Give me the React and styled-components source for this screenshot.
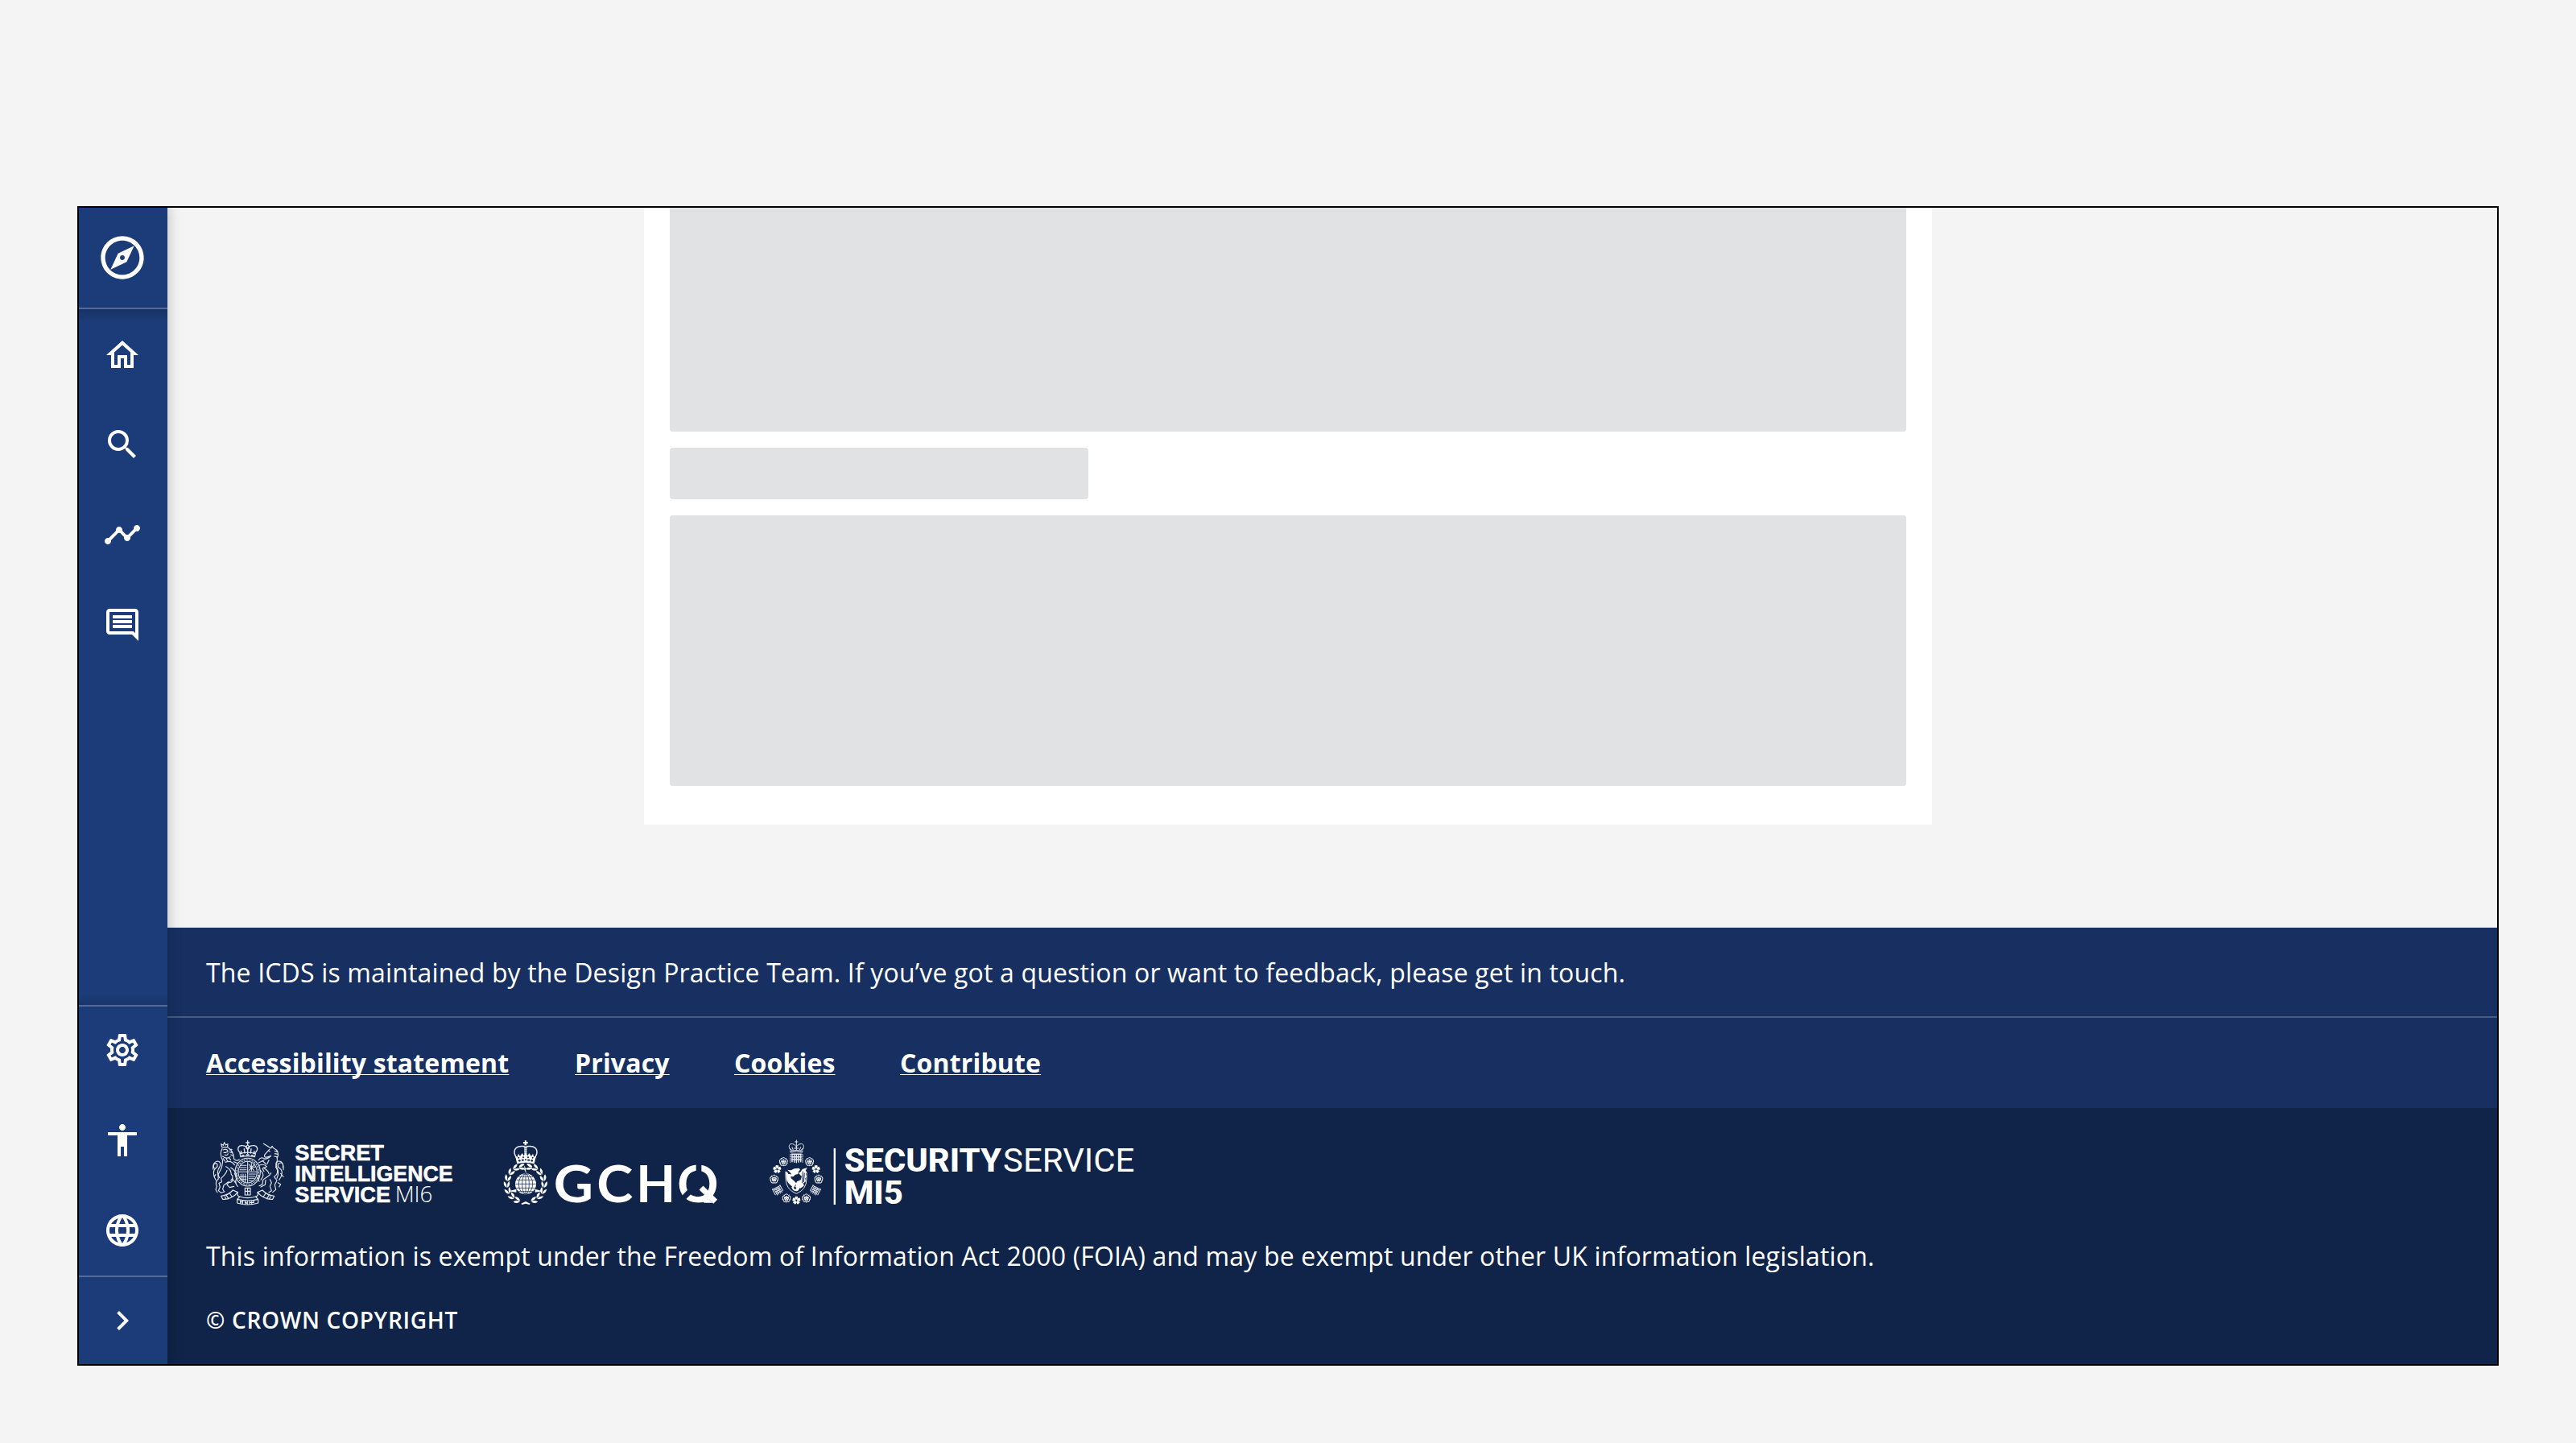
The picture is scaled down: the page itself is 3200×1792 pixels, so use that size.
import React from 'react';
import styled, { createGlobalStyle, css } from 'styled-components';

const GlobalStyle = createGlobalStyle`
  *, *::before, *::after { box-sizing: border-box; }
  body {
    margin: 0;
    background: #f4f4f4;
    font-family: "Open Sans", "Noto Sans", sans-serif;
    color: #fff;
  }
`;

const Page = styled.div`
  width: 3200px;
  height: 1792px;
  padding: 256px 96px 96px;
  overflow: hidden;
`;

const Frame = styled.div`
  position: relative;
  display: flex;
  height: 1440px;
  overflow: hidden;
  &::after {
    content: "";
    position: absolute;
    inset: 0;
    z-index: 2;
    border: 2px solid #000;
    pointer-events: none;
  }
`;

const SideBar = styled.nav`
  position: relative;
  z-index: 1;
  display: flex;
  flex-direction: column;
  width: 112px;
  background: #1c3c79;
  box-shadow: 0 0 16px rgba(0, 0, 0, 0.25);
`;

const Brand = styled.a`
  display: flex;
  align-items: center;
  justify-content: center;
  height: 128px;
  border-bottom: 2px solid #52699a;
  padding-top: 2px;
`;

const NavGroup = styled.div`
  display: flex;
  flex-direction: column;
  ${(p) =>
    p.$grow &&
    css`
      flex: 1;
      background:
        linear-gradient(to bottom, rgba(18, 36, 72, 0.4), rgba(18, 36, 72, 0) 16px),
        linear-gradient(to top, rgba(18, 36, 72, 0.3), rgba(18, 36, 72, 0) 14px);
    `}
  ${(p) => p.$ruled && css`box-shadow: inset 0 2px 0 #52699a;`}
`;

const NavItem = styled.button`
  display: flex;
  align-items: center;
  justify-content: center;
  height: 112px;
  padding: 0;
  border: 0;
  background: none;
  color: #fff;
`;

const Glyph = styled.svg`
  display: block;
  width: ${(p) => p.$size || 48}px;
  height: ${(p) => p.$size || 48}px;
  fill: #fff;
`;

const Main = styled.div`
  flex: 1;
  display: flex;
  flex-direction: column;
`;

const Content = styled.main`
  height: 896px;
  padding-left: 592px;
`;

const Sheet = styled.section`
  display: flex;
  flex-direction: column;
  gap: 20px;
  width: 1600px;
  height: 768px;
  padding: 0 32px;
  background: #fff;
`;

const Placeholder = styled.div`
  width: ${(p) => p.$width || '100%'};
  height: ${(p) => p.$height}px;
  border-radius: ${(p) => (p.$cut ? '0 0 4px 4px' : '4px')};
  background: #e1e2e4;
`;

const FooterBand = styled.div`
  display: flex;
  align-items: center;
  height: 112px;
  padding: 0 48px;
  background: #173061;
  ${(p) => p.$ruled && css`box-shadow: inset 0 -2px 0 #475a82;`}
`;

const Text = styled.p`
  margin: 0;
  font-size: 32px;
  line-height: 48px;
  letter-spacing: 0.005em;
  white-space: nowrap;
`;

const Links = styled.ul`
  display: flex;
  gap: 80px;
  margin: 0;
  padding: 0;
  list-style: none;
`;

const LinkItem = styled.li`
  width: ${(p) => p.$width}px;
  white-space: nowrap;
`;

const FooterLink = styled.a`
  font-size: 32px;
  font-weight: 700;
  line-height: 48px;
  letter-spacing: 0.005em;
  color: #fff;
  text-decoration: underline;
  text-decoration-thickness: 1px;
  text-underline-offset: 2px;
  text-decoration-skip-ink: none;
`;

const Closing = styled.div`
  flex: 1;
  padding: 24px 48px 0;
  background: #102449;
`;

const Logos = styled.div`
  display: flex;
  height: 110px;
  margin-bottom: 26px;
`;

const Logo = styled.svg`
  display: block;
  width: ${(p) => p.$width}px;
  height: 110px;
  fill: #fff;
`;

const Copyright = styled.p`
  margin: 31px 0 0;
  font-size: 28px;
  font-weight: 600;
  line-height: 48px;
  letter-spacing: 0.025em;
`;

const icons = {
  explore:
    'M12 10.9c-.61 0-1.1.49-1.1 1.1s.49 1.1 1.1 1.1c.61 0 1.1-.49 1.1-1.1s-.49-1.1-1.1-1.1zM12 2C6.48 2 2 6.48 2 12s4.48 10 10 10 10-4.48 10-10S17.52 2 12 2zm0 18c-4.41 0-8-3.59-8-8s3.59-8 8-8 8 3.59 8 8-3.59 8-8 8zm-5.5-2.5l7.51-3.49L17.5 6.5 9.99 9.99 6.5 17.5z',
  home: 'M12 6.19l5 4.5V18.5h-2v-6H9v6H7v-7.81l5-4.5M12 3.5L2 12.5h3v8h6v-6h2v6h6v-8h3L12 3.5z',
  search:
    'M15.5 14h-.79l-.28-.27A6.471 6.471 0 0 0 16 9.5 6.5 6.5 0 1 0 9.5 16c1.61 0 3.09-.59 4.23-1.57l.27.28v.79l5 4.99L20.49 19l-4.99-5zm-6 0C7.01 14 5 11.99 5 9.5S7.01 5 9.5 5 14 7.01 14 9.5 11.99 14 9.5 14z',
  timeline:
    'M23 8c0 1.1-.9 2-2 2-.18 0-.35-.02-.51-.07l-3.56 3.55c.05.16.07.34.07.52 0 1.1-.9 2-2 2s-2-.9-2-2c0-.18.02-.36.07-.52l-2.55-2.55c-.16.05-.34.07-.52.07s-.36-.02-.52-.07l-4.55 4.56c.05.16.07.33.07.51 0 1.1-.9 2-2 2s-2-.9-2-2 .9-2 2-2c.18 0 .35.02.51.07l4.56-4.55C8.02 9.36 8 9.18 8 9c0-1.1.9-2 2-2s2 .9 2 2c0 .18-.02.36-.07.52l2.55 2.55c.16-.05.34-.07.52-.07s.36.02.52.07l3.55-3.56C19.02 8.35 19 8.18 19 8c0-1.1.9-2 2-2s2 .9 2 2z',
  comment:
    'M21.99 4c0-1.1-.89-2-1.99-2H4c-1.1 0-2 .9-2 2v12c0 1.1.9 2 2 2h14l4 4-.01-18zM20 4v13.17L18.83 16H4V4h16zM6 12h12v2H6zm0-3h12v2H6zm0-3h12v2H6z',
  settings:
    'M19.43 12.98c.04-.32.07-.64.07-.98 0-.34-.03-.66-.07-.98l2.11-1.65c.19-.15.24-.42.12-.64l-2-3.46c-.09-.16-.26-.25-.44-.25-.06 0-.12.01-.17.03l-2.49 1c-.52-.4-1.08-.73-1.69-.98l-.38-2.65C14.46 2.18 14.25 2 14 2h-4c-.25 0-.46.18-.49.42l-.38 2.65c-.61.25-1.17.59-1.69.98l-2.49-1c-.06-.02-.12-.03-.18-.03-.17 0-.34.09-.43.25l-2 3.46c-.13.22-.07.49.12.64l2.11 1.65c-.04.32-.07.65-.07.98 0 .33.03.66.07.98l-2.11 1.65c-.19.15-.24.42-.12.64l2 3.46c.09.16.26.25.44.25.06 0 .12-.01.17-.03l2.49-1c.52.4 1.08.73 1.69.98l.38 2.65c.03.24.24.42.49.42h4c.25 0 .46-.18.49-.42l.38-2.65c.61-.25 1.17-.59 1.69-.98l2.49 1c.06.02.12.03.18.03.17 0 .34-.09.43-.25l2-3.46c.12-.22.07-.49-.12-.64l-2.11-1.65zm-1.98-1.71c.04.31.05.52.05.73 0 .21-.02.43-.05.73l-.14 1.13.89.7 1.08.84-.7 1.21-1.27-.51-1.04-.42-.9.68c-.43.32-.84.56-1.25.73l-1.06.43-.16 1.13-.2 1.35h-1.4l-.19-1.35-.16-1.13-1.06-.43c-.43-.18-.83-.41-1.23-.71l-.91-.7-1.06.43-1.27.51-.7-1.21 1.08-.84.89-.7-.14-1.13c-.03-.31-.05-.54-.05-.74s.02-.43.05-.73l.14-1.13-.89-.7-1.08-.84.7-1.21 1.27.51 1.04.42.9-.68c.43-.32.84-.56 1.25-.73l1.06-.43.16-1.13.2-1.35h1.39l.19 1.35.16 1.13 1.06.43c.43.18.83.41 1.23.71l.91.7 1.06-.43 1.27-.51.7 1.21-1.07.85-.89.7.14 1.13zM12 8c-2.21 0-4 1.79-4 4s1.79 4 4 4 4-1.79 4-4-1.79-4-4-4zm0 6c-1.1 0-2-.9-2-2s.9-2 2-2 2 .9 2 2-.9 2-2 2z',
  accessibility:
    'M12 2c1.1 0 2 .9 2 2s-.9 2-2 2-2-.9-2-2 .9-2 2-2zm9 7h-6v13h-2v-6h-2v6H9V9H3V7h18v2z',
  language:
    'M11.99 2C6.47 2 2 6.48 2 12s4.47 10 9.99 10C17.52 22 22 17.52 22 12S17.52 2 11.99 2zm6.93 6h-2.95c-.32-1.25-.78-2.45-1.38-3.56 1.84.63 3.37 1.91 4.33 3.56zM12 4.04c.83 1.2 1.48 2.53 1.91 3.96h-3.82c.43-1.43 1.08-2.76 1.91-3.96zM4.26 14C4.1 13.36 4 12.69 4 12s.1-1.36.26-2h3.38c-.08.66-.14 1.32-.14 2s.06 1.34.14 2H4.26zm.82 2h2.95c.32 1.25.78 2.45 1.38 3.56-1.84-.63-3.37-1.9-4.33-3.56zm2.95-8H5.08c.96-1.66 2.49-2.93 4.33-3.56C8.81 5.55 8.35 6.75 8.03 8zM12 19.96c-.83-1.2-1.48-2.53-1.91-3.96h3.82c-.43 1.43-1.08 2.76-1.91 3.96zM14.34 14H9.66c-.09-.66-.16-1.32-.16-2s.07-1.35.16-2h4.68c.09.65.16 1.32.16 2s-.07 1.34-.16 2zm.25 5.56c.6-1.11 1.06-2.31 1.38-3.56h2.95c-.96 1.65-2.49 2.93-4.33 3.56zM16.36 14c.08-.66.14-1.32.14-2s-.06-1.34-.14-2h3.38c.16.64.26 1.31.26 2s-.1 1.36-.26 2h-3.38z',
  chevron: 'M10 6L8.59 7.41 13.17 12l-4.58 4.59L10 18l6-6-6-6z',
};

function Icon({ name, size }) {
  return (
    <Glyph viewBox="0 0 24 24" $size={size} aria-hidden="true">
      <path d={icons[name]} fillRule="evenodd" />
    </Glyph>
  );
}

const Line = styled.g`
  fill: none;
  stroke: #e6e9ef;
  stroke-width: ${(p) => p.$w || 3.4};
  stroke-linecap: round;
  stroke-linejoin: round;
`;

const LogoText = styled.text`
  font-family: ${(p) => p.$family || '"Liberation Sans", Arial, sans-serif'};
  font-weight: ${(p) => p.$weight || 700};
  font-size: ${(p) => p.$size}px;
`;

function RoyalArms() {
  return (
    <>
      {/* crown */}
      <Line $w={4}>
        <path d="M203 50v16M197 57h12M203 66c-8 4-8 12 0 16M203 66c8 4 8 12 0 16" />
        <path d="M176 96c-16-14-8-30 8-28 10 1 18 7 19 14M230 96c16-14 8-30-8-28-10 1-18 7-19 14" />
        <path d="M178 88l3 10M190 80l2 16M216 80l-2 16M228 88l-3 10M203 84v14" />
        <path d="M174 98q29-9 58 0l-3 12q-26-6-52 0zM182 104h6M199 102h8M218 104h6" />
      </Line>
      {/* garter and quartered shield */}
      <Line $w={3.2}>
        <ellipse cx="203" cy="167" rx="47" ry="52" />
        <ellipse cx="203" cy="167" rx="35" ry="40" />
        <ellipse cx="203" cy="167" rx="41" ry="46" strokeDasharray="4 6" />
        <path d="M203 128v78M170 166h66" />
        <path d="M176 142h22M174 150h24M174 158h24M208 138l18 22M228 138l-20 22M217 134v28M210 148h20M178 174v22M186 174v28M194 174v30M174 184h24M178 194h20M208 174h24M208 182h22M208 190h20M208 198h12" />
      </Line>
      {/* lion */}
      <Line>
        <path d="M107 74l-3-12 8 5 4-11 5 10 8-4-1 12z" />
        <path d="M108 80c-8 12-6 28 2 44M130 76c12 6 20 22 22 40M112 84c6-4 14-2 17 4M114 94h8M124 92h5M118 102c5 4 10 2 12-4M110 108c8 8 20 8 28 2M136 92l10 2M140 102l10 4M136 84l8-2M112 116l6 10M122 114l6 12M132 112l8 10" />
        <path d="M110 124c-2 16-2 24-8 34-8 14-12 22-8 34M152 118c6 6 14 6 20 2M152 128l14 6M120 130c14-6 26-2 34 10M122 146c12 6 20 16 20 30M142 176c8 4 6 16-2 22M140 150c10 6 18 16 22 28M154 172l8 14M126 160c-4 14-14 22-22 30M104 190l2 14-10 4 4 14-6 14 10 8 12-4-6-10 4-14 16-12c12 4 16-2 18-12M94 192c-10 8-10 20-6 28l-4 12 6 10" />
        <path d="M84 196c-12-20-10-38 2-46 8-6 4-18-4-16-6 2-8 12-4 18M74 156c-2-16 4-28 16-30 12 0 14 12 8 22-10 14-8 28 0 40M84 176l-6 8" />
        <path d="M134 202l-8 12 10 10 16-4M150 196l10 14M162 190c-8 14-4 22 4 30" />
      </Line>
      {/* unicorn */}
      <Line>
        <path d="M262 61l28 17M290 78l4-8 6 8M270 98c-6 4-6 12 0 14 8-2 14-2 20-6M270 98l14-16M282 88l4 2M300 78c14 6 20 18 14 34M304 88l10 4M304 98l12 2M302 108l10 2M290 106c-6 8-14 10-22 12M268 118c-12-8-20-4-24 4M244 132l20-10M246 142c12-6 20-4 28 4M274 146l-16 8 6 10M312 112c4 12-2 24-4 36" />
        <path d="M308 148c10 14 8 26-6 36M302 184l10 14-8 16 4 18-12 10M290 170c-6 14-20 16-30 26l-2 16-12 6M286 194l6 12-6 14 6 16-10 6M250 160c8 6 12 12 10 22l-8 14M262 150c12 8 18 12 20 22M246 178l-6 14 6 10M270 196l-2 18-16 8M258 124l14 14M282 122l-6 14" />
        <path d="M320 196c14-18 14-36 2-44-10-6-8-20 4-20 8 0 10 8 8 16M336 158c2-18-4-32-16-32-14 0-14 14-8 24 8 14 6 26 0 40M326 172l10 12M316 206l10 6-6 10" />
      </Line>
      {/* scroll */}
      <Line $w={3.6}>
        <path d="M104 256c16-2 30-6 44-22M110 268c20 2 44-10 56-26M148 234l18 8M104 256l6 12M124 254l8 12M136 246l8 12M118 258l4 8" />
        <path d="M302 256c-16-2-30-6-44-22M296 268c-20 2-44-10-56-26M258 234l-18 8M302 256l-6 12M282 254l-8 12M270 246l-8 12M288 258l-4 8" />
        <path d="M164 268q39 10 78 0v14q-39 12-78 0zM166 242c-4 8 0 16 8 16l-10 10M240 242c4 8 0 16-8 16l10 10M174 258q28 10 58 0M176 274v8M184 274v10M178 278h6M194 276v10M202 276v10M194 278l8 6M210 276v8M218 276v8M226 272v8M210 280h16M193 226h20v26h-20zM203 226v26M193 238h20" />
      </Line>
    </>
  );
}

// x, y and tilt of each leaf pair on the left half of the wreath
const laurel = [
  [204, 148, 78], [182, 152, 60], [164, 168, 35], [152, 190, 15],
  [149, 214, -5], [154, 238, -25], [168, 258, -48], [188, 272, -72],
];

function Leaves({ x, y, tilt }) {
  return (
    <g transform={`translate(${x} ${y}) rotate(${tilt})`}>
      <path d="M-1 11Q-15 3-10-13Q1-5-1 11z" />
      <path d="M1 11Q15 3 10-13Q-1-5 1 11z" />
    </g>
  );
}

function Wreath() {
  return laurel.map(([x, y, tilt]) => <Leaves key={tilt} x={x} y={y} tilt={tilt} />);
}

function GchqCrest() {
  return (
    <>
      <path d="M215 49h7l-1 5h6v7h-6l2 6h-9l2-6h-6v-7h6z" />
      <Line $w={4.5}>
        <path d="M184 112c-12-18-8-34 8-40 12-4 24 0 27 2 3-2 15-6 27-2 16 6 20 22 8 40" />
        <path d="M216 74v28M221 74v28" strokeDasharray="4 3" />
      </Line>
      <path d="M180 106l8 4 4-12 6 10 8-12 6 10 7-12 7 12 6-10 8 12 6-10 4 12 8-4-7 30q-32-9-64 0z" />
      <g fill="#102449">
        <circle cx="196" cy="124" r="4" />
        <rect x="204" y="119" width="8" height="6" />
        <circle cx="219" cy="121" r="3" />
        <rect x="226" y="119" width="8" height="6" />
        <circle cx="242" cy="124" r="4" />
        <circle cx="193" cy="113" r="3" />
        <circle cx="210" cy="112" r="3" />
        <circle cx="228" cy="112" r="3" />
        <circle cx="245" cy="113" r="3" />
      </g>
      <Wreath />
      <g transform="translate(437 0) scale(-1 1)">
        <Wreath />
      </g>
      <path d="M212 140l8 14-1 6 3 14-8-16 1-5z" />
      <circle cx="219" cy="211" r="39" />
      <path d="M184 230l-28 8 28 4zM254 230l28 8-28 4z" />
      <g fill="none" stroke="#102449" strokeWidth="2.2">
        <path d="M219 173v76M184 196h70M181 211h76M184 226h70M192 184h54M192 239h54" />
        <ellipse cx="219" cy="211" rx="13" ry="38" />
        <ellipse cx="219" cy="211" rx="26" ry="38" />
      </g>
      <path d="M202 284l17-8 17 8-3 4-14-4-14 4z" />
    </>
  );
}

function Rosette({ x, y, solid }) {
  const petals = [0, 72, 144, 216, 288];
  return (
    <g transform={`translate(${x} ${y})`}>
      {petals.map((r) => (
        <g key={r} transform={`rotate(${r})`}>
          {solid ? (
            <path d="M0-1L-5-7Q-8-16-1-15L0-13L1-15Q8-16 5-7z" />
          ) : (
            <path
              d="M-8-10Q0-21 8-10M-4-5Q0-12 4-5M0-3V-7M10-13l-2 2"
              fill="none"
              stroke="#fff"
              strokeWidth="2.8"
            />
          )}
        </g>
      ))}
      {solid ? <circle r="3" fill="#102449" /> : <circle r="3.5" />}
    </g>
  );
}

function Portcullis({ x, y, rotate }) {
  return (
    <g transform={`translate(${x} ${y}) rotate(${rotate})`}>
      <Line $w={3}>
        <path d="M-14-12H14M-10-6H10M-10 1H10M-10 8H10M-10-12V14M-3-12V14M4-12V14M10-12V14M-16-14V10M16-14V10" />
      </Line>
    </g>
  );
}

function Mi5Crest() {
  return (
    <>
      {/* crown over portcullis */}
      <Line $w={3}>
        <path d="M208 48v14M203 54h10M186 84c-12-14-2-26 8-22 8 2 12 6 14 12M230 84c12-14 2-26-8-22-8 2-12 6-14 12M208 64v22M192 74l4 10M224 74l-4 10M200 78h16M184 78l8 8M232 78l-8 8" />
        <path d="M184 88q24-6 48 0M186 93q22-5 44 0" />
      </Line>
      <Line $w={4.4}>
        <path d="M190 100h36M190 110h36M190 120h36M192 100v28M200 100v30M208 100v31M216 100v30M224 100v28" />
      </Line>
      <Line $w={3}>
        <path d="M185 100v30M231 100v30" strokeDasharray="3 4" />
      </Line>
      <Rosette x={160} y={128} />
      <Rosette x={257} y={128} />
      <Rosette x={136} y={156} solid />
      <Rosette x={281} y={156} solid />
      <Rosette x={125} y={193} />
      <Rosette x={291} y={193} />
      <Portcullis x={139} y={235} rotate={-28} />
      <Portcullis x={278} y={235} rotate={28} />
      <Rosette x={171} y={264} />
      <Rosette x={245} y={264} />
      <Rosette x={208} y={272} solid />
      {/* shield with winged sea-lion */}
      <path d="M168 164v26q0 42 40 57q38-15 38-55v-24" fill="none" stroke="#fff" strokeWidth="2.6" />
      <path d="M168 164l7 4 3 6 8 0 2 16 10 8 8 8-2 10-6 8q-26-16-28-36zM174 158l14 2 12-6 18-2 4 6-6 6-2 10-10 2-8 8-10-2 2-10-6-6zM216 170l8-4 6-10 18-6-6 12 5 4-5 8 4 10-5 6 2 12-9 6 2 10-14 10-6-8-10-6 4-12 14-6 4-14-6-4zM208 206q12 6 12 18-2 12-12 14-14-2-18-14 2-12 18-18z" />
      <path d="M232 164l-2 44M238 170l-3 34M206 214q-10 10-2 16" fill="none" stroke="#102449" strokeWidth="3" />
      <circle cx="203" cy="226" r="4" fill="#102449" />
    </>
  );
}

function SisLogo() {
  return (
    <Logo viewBox="48 0 972 330" $width={324} role="img" aria-label="Secret Intelligence Service MI6">
      <RoyalArms />
      <g stroke="#fff" strokeWidth="1.6">
        <LogoText x="379" y="124" $size={84} textLength="332" lengthAdjust="spacingAndGlyphs">SECRET</LogoText>
        <LogoText x="379" y="201" $size={84} textLength="589" lengthAdjust="spacingAndGlyphs">INTELLIGENCE</LogoText>
        <LogoText x="379" y="278" $size={84} textLength="356" lengthAdjust="spacingAndGlyphs">SERVICE</LogoText>
      </g>
      <LogoText x="752" y="278" $size={83} $weight={300} $family='"Open Sans", sans-serif' textLength="140" lengthAdjust="spacingAndGlyphs">MI6</LogoText>
    </Logo>
  );
}

// each letter keeps its own x position and horizontal stretch
const gchqLetters = [
  ['G', 323.5, 1.07],
  ['C', 483.5, 1.075],
  ['H', 631, 1],
  ['Q', 784, 1],
];

function GchqLogo() {
  return (
    <Logo viewBox="0 0 1020 330" $width={340} role="img" aria-label="GCHQ">
      <GchqCrest />
      {gchqLetters.map(([letter, x, stretch]) => (
        <LogoText
          key={letter}
          transform={`translate(${x} 278) scale(${stretch} 1)`}
          $size={190}
          $weight={700}
          $family="Lato, sans-serif"
        >
          {letter}
        </LogoText>
      ))}
      {/* stencil cuts and short crossing tail of the Q */}
      <path d="M800 281h150v40h-150z" fill="#102449" />
      <path d="M864 130v40M806 264l28-28" stroke="#102449" strokeWidth="20" fill="none" />
      <path d="M873 225l53 52" stroke="#fff" strokeWidth="21" fill="none" />
    </Logo>
  );
}

function Mi5Logo() {
  return (
    <Logo viewBox="0 0 1560 330" $width={520} role="img" aria-label="Security Service MI5">
      <Mi5Crest />
      <rect x="347" y="78" width="7" height="210" />
      <LogoText x="386" y="165" $size={121} $weight={800} $family="Roboto, sans-serif" textLength="586" lengthAdjust="spacingAndGlyphs">SECURITY</LogoText>
      <LogoText x="978" y="165" $size={121} $weight={400} $family="Roboto, sans-serif" textLength="490" lengthAdjust="spacingAndGlyphs">SERVICE</LogoText>
      <LogoText x="386" y="286" $size={121} $weight={800} $family="Roboto, sans-serif" textLength="220" lengthAdjust="spacingAndGlyphs">MI5</LogoText>
    </Logo>
  );
}

const links = [
  ['Accessibility statement', 378],
  ['Privacy', 118],
  ['Cookies', 126],
  ['Contribute', 176],
];

export default function App() {
  return (
    <Page>
      <GlobalStyle />
      <Frame>
        <SideBar>
          <Brand>
            <Icon name="explore" size={64} />
          </Brand>
          <NavGroup $grow>
            {['home', 'search', 'timeline', 'comment'].map((name) => (
              <NavItem key={name} aria-label={name}>
                <Icon name={name} />
              </NavItem>
            ))}
          </NavGroup>
          <NavGroup $ruled>
            {['settings', 'accessibility', 'language'].map((name) => (
              <NavItem key={name} aria-label={name}>
                <Icon name={name} />
              </NavItem>
            ))}
          </NavGroup>
          <NavGroup $ruled>
            <NavItem aria-label="expand">
              <Icon name="chevron" />
            </NavItem>
          </NavGroup>
        </SideBar>
        <Main>
          <Content>
            <Sheet>
              <Placeholder $height={280} $cut />
              <Placeholder $height={64} $width="520px" />
              <Placeholder $height={336} />
            </Sheet>
          </Content>
          <FooterBand $ruled>
            <Text>
              The ICDS is maintained by the Design Practice Team. If you’ve got a question or want to
              feedback, please get in touch.
            </Text>
          </FooterBand>
          <FooterBand>
            <Links>
              {links.map(([label, width]) => (
                <LinkItem key={label} $width={width}>
                  <FooterLink>{label}</FooterLink>
                </LinkItem>
              ))}
            </Links>
          </FooterBand>
          <Closing>
            <Logos>
              <SisLogo />
              <GchqLogo />
              <Mi5Logo />
            </Logos>
            <Text>
              This information is exempt under the Freedom of Information Act 2000 (FOIA) and may be
              exempt under other UK information legislation.
            </Text>
            <Copyright>© CROWN COPYRIGHT</Copyright>
          </Closing>
        </Main>
      </Frame>
    </Page>
  );
}
